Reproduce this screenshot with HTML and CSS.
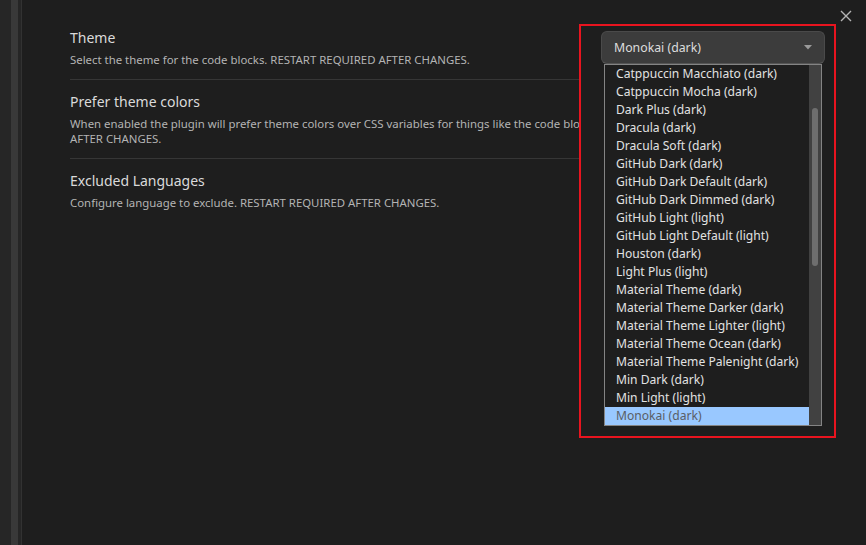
FILE: index.html
```html
<!DOCTYPE html>
<html>
<head>
<meta charset="utf-8">
<link rel="stylesheet" href="styles.css">
</head>
<body>
<div class="app">
  <div class="gutter"><div class="gutter-thumb"></div></div>
  <div class="main">
    <div class="settings">
      <div class="setting-item">
        <div class="setting-info">
          <div class="setting-name">Theme</div>
          <div class="setting-desc">Select the theme for the code blocks. RESTART REQUIRED AFTER CHANGES.</div>
        </div>
        <div class="setting-control"></div>
      </div>
      <div class="setting-item">
        <div class="setting-info">
          <div class="setting-name">Prefer theme colors</div>
          <div class="setting-desc">When enabled the plugin will prefer theme colors over CSS variables for things like the code block background. RESTART REQUIRED AFTER CHANGES.</div>
        </div>
        <div class="setting-control"><div class="toggle"></div></div>
      </div>
      <div class="setting-item">
        <div class="setting-info">
          <div class="setting-name">Excluded Languages</div>
          <div class="setting-desc">Configure language to exclude. RESTART REQUIRED AFTER CHANGES.</div>
        </div>
        <div class="setting-control"></div>
      </div>
    </div>
  </div>
</div>

<button class="close" aria-label="Close">
  <svg width="12" height="12" viewBox="0 0 12 12"><path d="M1 1 L11 11 M11 1 L1 11" stroke="#b4b4b4" stroke-width="1.4" fill="none"/></svg>
</button>

<div class="popup">
  <div class="select">
    <span class="select-value">Monokai (dark)</span>
    <svg class="select-arrow" width="8" height="5" viewBox="0 0 8 5"><path d="M0 0 H8 L4 4.5 Z" fill="#9a9a9a"/></svg>
  </div>
  <div class="listbox">
    <div class="options">
      <div class="option">Catppuccin Macchiato (dark)</div>
      <div class="option">Catppuccin Mocha (dark)</div>
      <div class="option">Dark Plus (dark)</div>
      <div class="option">Dracula (dark)</div>
      <div class="option">Dracula Soft (dark)</div>
      <div class="option">GitHub Dark (dark)</div>
      <div class="option">GitHub Dark Default (dark)</div>
      <div class="option">GitHub Dark Dimmed (dark)</div>
      <div class="option">GitHub Light (light)</div>
      <div class="option">GitHub Light Default (light)</div>
      <div class="option">Houston (dark)</div>
      <div class="option">Light Plus (light)</div>
      <div class="option">Material Theme (dark)</div>
      <div class="option">Material Theme Darker (dark)</div>
      <div class="option">Material Theme Lighter (light)</div>
      <div class="option">Material Theme Ocean (dark)</div>
      <div class="option">Material Theme Palenight (dark)</div>
      <div class="option">Min Dark (dark)</div>
      <div class="option">Min Light (light)</div>
      <div class="option selected">Monokai (dark)</div>
    </div>
    <div class="scrollbar"><div class="scroll-thumb"></div></div>
  </div>
</div>
</body>
</html>
```

FILE: styles.css
```css
html, body {
  margin: 0;
  padding: 0;
  height: 100%;
  background: #1e1e1e;
  font-family: "Noto Sans", "Open Sans", sans-serif;
  overflow: hidden;
}

.app {
  display: flex;
  height: 100%;
}

.gutter {
  width: 21px;
  flex: none;
  background: #262626;
  border-right: 1px solid #323232;
}

.gutter-thumb {
  margin-left: 11px;
  width: 7px;
  height: 100%;
  background: #393939;
}

.main {
  flex: 1;
  padding: 16px 43px 0 48px;
}

.setting-item {
  display: flex;
  padding: 12px 0;
  border-top: 1px solid #363636;
}

.setting-item:first-child {
  border-top: none;
}

.setting-info {
  flex: 1;
  padding-right: 8px;
}

.setting-name {
  font-size: 14px;
  line-height: 20px;
  color: #dadada;
}

.setting-desc {
  margin-top: 4px;
  font-size: 11.4px;
  line-height: 15px;
  color: #b4b4b4;
}

.setting-control {
  width: 40px;
  flex: none;
}

.toggle {
  width: 40px;
  height: 22px;
}

.close {
  position: absolute;
  left: 840px;
  top: 10px;
  width: 12px;
  height: 12px;
  padding: 0;
  border: none;
  background: none;
  display: block;
}

.close svg {
  display: block;
}

.popup {
  position: absolute;
  left: 579px;
  top: 24px;
  width: 253px;
  height: 410px;
  border: 2px solid #e8141f;
  background: #1e1e1e;
}

.select {
  position: absolute;
  left: 20px;
  top: 5px;
  width: 222px;
  height: 31px;
  box-sizing: content-box;
  border: 1px solid #4a4a4a;
  border-bottom-color: #555;
  border-radius: 6px;
  background: #3c3c3c;
  display: flex;
  align-items: center;
  padding: 0;
}

.select-value {
  margin-left: 12px;
  flex: 1;
  font-size: 12.3px;
  color: #dcdcdc;
}

.select-arrow {
  margin-right: 12px;
}

.listbox {
  position: absolute;
  left: 23px;
  top: 38px;
  width: 216px;
  height: 360px;
  border: 1px solid #848484;
  display: flex;
  background: #1e1e1e;
}

.options {
  flex: 1;
}

.option {
  height: 18px;
  line-height: 18px;
  padding-left: 11px;
  font-size: 12.1px;
  color: #e2e2e2;
  white-space: nowrap;
}

.option.selected {
  background: #99c8ff;
  color: #5a5e66;
}

.scrollbar {
  width: 12px;
  flex: none;
  background: #414141;
  position: relative;
}

.scroll-thumb {
  position: absolute;
  left: 3px;
  top: 43px;
  width: 6px;
  height: 158px;
  border-radius: 3px;
  background: #6e6e6e;
}
```
